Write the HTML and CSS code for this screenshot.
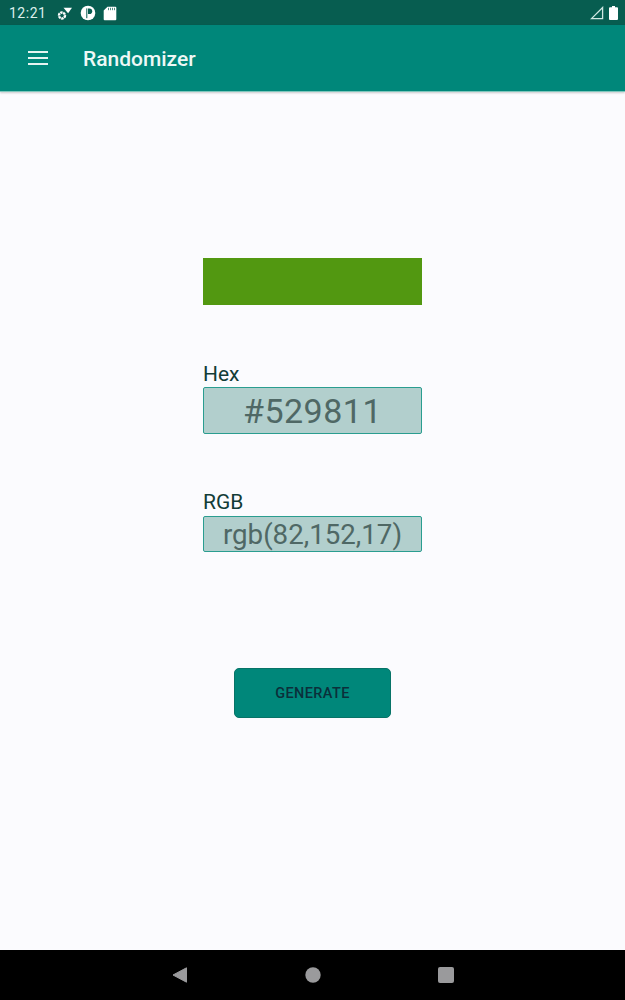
FILE: index.html
```html
<!DOCTYPE html>
<html lang="en">
<head>
<meta charset="utf-8">
<title>Randomizer</title>
<link rel="stylesheet" href="styles.css">
</head>
<body>
<div class="screen">
  <div class="status">
    <span class="time">12:21</span>
    <svg class="si first" width="16" height="16" viewBox="0 0 16 16"><circle cx="5" cy="10.500" r="3" fill="none" stroke="#fff" stroke-width="2.400" stroke-dasharray="2.400 .6"/><path d="M6.500 2.800h8.500l-3.900 5.400z" fill="#fff"/></svg>
    <svg class="si" width="16" height="16" viewBox="0 0 16 16"><circle cx="8" cy="8" r="7.300" fill="#fff"/><path d="M8 3.500h1.400a2.800 2.800 0 0 1 0 5.600H8z" fill="#075d50"/><path d="M6.800 3.400v9.800" stroke="#075d50" stroke-width="1"/></svg>
    <svg class="si" width="14" height="16" viewBox="0 0 14 16"><path d="M4.500 1.800h7.800a1 1 0 0 1 1 1v11.400a1 1 0 0 1-1 1H1.700a1 1 0 0 1-1-1V5.500z" fill="#fff"/><path d="M5.500 2.800v2.400M7.500 2.800v2.400M9.500 2.800v2.400M11.500 2.800v2.400" stroke="#075d50" stroke-width=".7"/></svg>
    <span class="spacer"></span>
    <svg class="sr" width="14" height="14" viewBox="0 0 14 14"><path d="M1.500 12.600 12.600 1.500v11.100z" fill="none" stroke="#cfe8e3" stroke-width="1.300"/></svg>
    <svg class="batt" width="9" height="14" viewBox="0 0 9 14"><path d="M3 0h3v1.300h2a1 1 0 0 1 1 1V13a1 1 0 0 1-1 1H1a1 1 0 0 1-1-1V2.300a1 1 0 0 1 1-1h2z" fill="#fff"/></svg>
  </div>
  <header class="appbar">
    <svg class="menu" width="22" height="16" viewBox="0 0 22 16"><path d="M1 2h20M1 8h20M1 14h20" stroke="#e6f4f1" stroke-width="2"/></svg>
    <span class="title">Randomizer</span>
  </header>
  <main class="content">
    <div class="swatch"></div>
    <div class="field hex-field">
      <div class="label">Hex</div>
      <div class="box hex">#529811</div>
    </div>
    <div class="field rgb-field">
      <div class="label">RGB</div>
      <div class="box rgb">rgb(82,152,17)</div>
    </div>
    <button class="generate">GENERATE</button>
  </main>
  <nav class="navbar">
    <svg class="back" width="15" height="16" viewBox="0 0 15 16"><path d="M14.500 .8v14.400L1 8z" fill="#9a9a9c" stroke="#9a9a9c" stroke-linejoin="round"/></svg>
    <svg width="16" height="16" viewBox="0 0 16 16"><circle cx="8" cy="8" r="7.700" fill="#9a9a9c"/></svg>
    <svg width="16" height="16" viewBox="0 0 16 16"><rect width="16" height="16" rx="2" fill="#9a9a9c"/></svg>
  </nav>
</div>
</body>
</html>
```

FILE: styles.css
```css
* { box-sizing: border-box; }
html, body { margin: 0; padding: 0; }
body { font-family: Roboto, "Liberation Sans", sans-serif; background: #fbfbfe; }
.screen { width: 625px; height: 1000px; display: flex; flex-direction: column; overflow: hidden; }
.status { height: 25px; flex: none; background: #075d50; color: #dcefeb; display: flex; align-items: center; padding: 1px 7px 0 9px; font-size: 14px; }
.time { width: 40px; letter-spacing: .5px; }
.si { margin-right: 7px; }
.si.first { margin-left: 8px; }
.spacer { flex: 1; }
.sr { margin-right: 5px; }
.appbar { height: 67px; flex: none; background: #00877a; display: flex; align-items: center; padding: 0 0 0 27px; box-shadow: 0 1px 2px rgba(0,0,0,.2); border-bottom: 1px solid #7fc7bd; }
.title { margin: 2px 0 0 34px; color: #eef8f6; font-size: 21px; font-weight: 500; }
.content { flex: 1; display: flex; flex-direction: column; align-items: center; padding-top: 166px; }
.swatch { width: 219px; height: 47px; background: #529811; }
.field { width: 219px; }
.hex-field { margin-top: 55px; }
.hex-field .label { line-height: 28px; }
.rgb-field { margin-top: 55px; }
.label { color: #123c37; font-size: 21px; line-height: 26px; height: 27px; }
.box { width: 219px; background: #b2cfcd; border: 1px solid #2a9d90; border-radius: 2px; color: #4f6865; text-align: center; display: flex; align-items: center; justify-content: center; }
.hex { height: 47px; font-size: 34px; letter-spacing: .5px; }
.rgb { height: 36px; font-size: 27.7px; }
.generate { margin-top: 116px; width: 157px; height: 50px; background: #00877a; border: 1px solid #077367; border-radius: 5px; color: #0b2f3a; font: 500 14.500px Roboto, "Liberation Sans", sans-serif; letter-spacing: .4px; padding: 0; }
.navbar { height: 50px; flex: none; background: #000; display: flex; align-items: center; justify-content: space-between; padding: 0 171px 0 172px; }
```
